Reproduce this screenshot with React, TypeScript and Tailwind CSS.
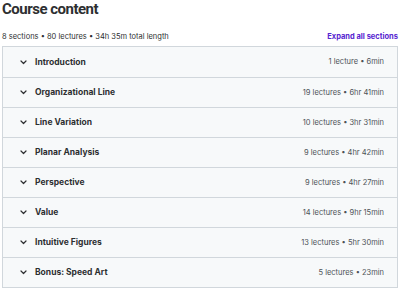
import React from "react";

const SECTIONS = [
  { title: "Introduction", meta: "1 lecture • 6min" },
  { title: "Organizational Line", meta: "19 lectures • 6hr 41min" },
  { title: "Line Variation", meta: "10 lectures • 3hr 31min" },
  { title: "Planar Analysis", meta: "9 lectures • 4hr 42min" },
  { title: "Perspective", meta: "9 lectures • 4hr 27min" },
  { title: "Value", meta: "14 lectures • 9hr 15min" },
  { title: "Intuitive Figures", meta: "13 lectures • 5hr 30min" },
  { title: "Bonus: Speed Art", meta: "5 lectures • 23min" },
];

const Chevron = () => (
  <svg width="7" height="5" viewBox="0 0 7 5" className="text-[#2d2f31]">
    <path d="M1 1 L3.5 3.5 L6 1" fill="none" stroke="currentColor" strokeWidth="1.2" strokeLinecap="round" strokeLinejoin="round" />
  </svg>
);

export default function App() {
  return (
    <div className="w-[400px] h-[288px] overflow-hidden bg-white px-[2px] font-['Inter',sans-serif] text-[#2d2f31]">
      <h2 className="pt-[1px] font-['Roboto',sans-serif] text-[15px] leading-[16px] font-bold tracking-[-0.5px]">Course content</h2>
      <div className="flex items-center justify-between mt-[13px] h-[14px]">
        <span className="text-[7.5px] text-[#2d2f31]">8 sections • 80 lectures • 34h 35m total length</span>
        <span className="text-[7.5px] font-bold text-[#5624d0]">Expand all sections</span>
      </div>
      <div className="mt-[2px] border border-[#d1d7dc]">
        {SECTIONS.map((s, i) => (
          <div
            key={s.title}
            className={`flex items-center h-[30px] bg-[#f7f9fa] pl-[17px] pr-[13px] ${i > 0 ? "border-t border-[#d1d7dc]" : ""}`}
          >
            <Chevron />
            <span className="ml-[8px] text-[8.5px] font-bold">{s.title}</span>
            <span className="ml-auto text-[7.5px] text-[#4d5257]">{s.meta}</span>
          </div>
        ))}
      </div>
    </div>
  );
}
